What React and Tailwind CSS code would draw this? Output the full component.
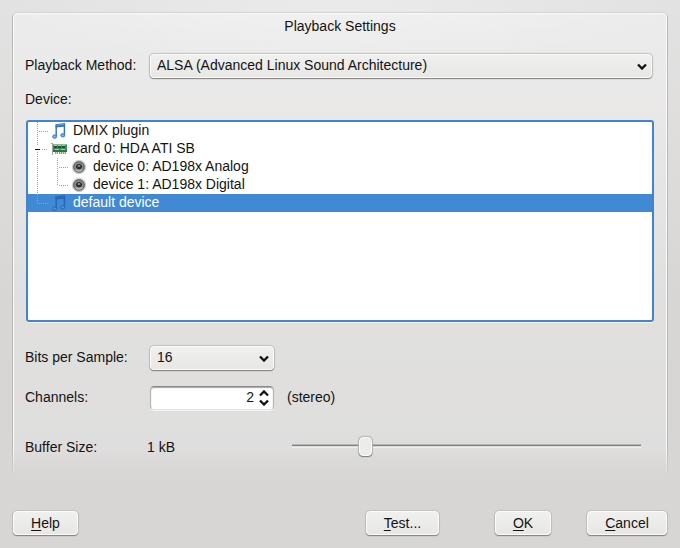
import React, { useState } from "react";

const raised =
  "rounded-[4px] border border-[#fbfbfb] bg-linear-to-b from-[#f0f0ef] to-[#e7e7e6] shadow-[0_1px_1px_0_#828180,0_0_1px_1px_#c2c1c0]";

function NoteIcon({ dim = false }) {
  const stem = dim ? "#2663b4" : "#2f6fc4";
  const light = dim ? "#3675c4" : "#7fb4ee";
  const head = dim ? "#4a90dd" : "#6cb0f2";
  return (
    <svg className="size-4 shrink-0" viewBox="0 0 16 16" aria-hidden="true">
      <path d="M5.2 2.5 V13 M13.4 1.5 V12" fill="none" stroke={stem} strokeWidth="1.4" />
      <path d="M4.5 1.2 L14.1 0 V3.4 L4.5 4.4 Z" fill={stem} />
      <path d="M5.6 2.3 L13.4 1.3" stroke={light} strokeWidth=".8" />
      <ellipse cx="3.6" cy="13.6" rx="2" ry="1.7" fill={head} stroke={stem} strokeWidth=".9" />
      <ellipse cx="11.8" cy="12.3" rx="2" ry="1.7" fill={head} stroke={stem} strokeWidth=".9" />
    </svg>
  );
}

function CardIcon() {
  return (
    <svg className="size-4 shrink-0" viewBox="0 0 16 16" aria-hidden="true">
      <path d="M0 2 H2 V14 H1 V3 H0 Z" fill="#a3a5a1" />
      <path d="M2 3 H16 V11 H2 Z" fill="#3c8d5f" />
      <path d="M2 3 H16 V4 H2 Z" fill="#8cba8c" />
      <path d="M2 9 H16 V11 H2 Z" fill="#2b7350" />
      <path d="M3 5 H6 V7 H3 Z M7 5 H10 V7 H7 Z M11 5 H14 V7 H11 Z" fill="#1d4f3c" />
      <path d="M3 4.5 H6 M7 4.5 H10 M11 4.5 H14 M4 8.5 H8 M10 8.5 H14" stroke="#b6cf9a" />
      <path d="M4 11 H7 V13 H4 Z M8 11 H15 V13 H8 Z" fill="#b39a3c" />
      <path d="M5.5 11 V13 M9.5 11 V13 M11.5 11 V13 M13.5 11 V13" stroke="#e3d99a" />
    </svg>
  );
}

function SpeakerIcon() {
  return (
    <svg className="size-4 shrink-0" viewBox="0 0 16 16" aria-hidden="true">
      <circle cx="8" cy="8" r="6.6" fill="#9c9c9c" stroke="#cfcfcf" strokeWidth="1.2" />
      <circle cx="8" cy="8" r="5.2" fill="#8a8a8a" stroke="#5b5b5b" strokeWidth=".9" />
      <ellipse cx="8" cy="7.6" rx="3" ry="2.6" fill="#2c2c2c" />
      <ellipse cx="8" cy="7" rx="1.5" ry="1.1" fill="#8f8f8f" />
      <path d="M4.6 10.6 Q8 13.6 11.4 10.6" fill="none" stroke="#c9c9c9" strokeWidth="1.2" />
    </svg>
  );
}

const guides = {
  first: { w: 23, dots: "M9.5 0 V18 M11 9.5 H20" },
  branch: { w: 23, dots: "M9.5 0 V6 M9.5 12 V18 M14 9.5 H20", minus: true },
  child: { w: 43, dots: "M9.5 0 V18 M29.5 0 V18 M31 9.5 H40" },
  lastChild: { w: 43, dots: "M9.5 0 V18 M29.5 0 V10 M31 9.5 H40" },
  last: { w: 23, dots: "M9.5 0 V10 M11 9.5 H20" },
};

function Guide({ kind }) {
  const g = guides[kind];
  return (
    <svg width={g.w} height="18" className="shrink-0" aria-hidden="true">
      <path d={g.dots} fill="none" stroke="#a0a0a0" strokeDasharray="1 1" />
      {g.minus && <path d="M7 9.5 H12" stroke="#111" />}
    </svg>
  );
}

const devices = [
  { name: "DMIX plugin", kind: "first", level: 1, icon: NoteIcon },
  { name: "card 0: HDA ATI SB", kind: "branch", level: 1, icon: CardIcon },
  { name: "device 0: AD198x Analog", kind: "child", level: 2, icon: SpeakerIcon },
  { name: "device 1: AD198x Digital", kind: "lastChild", level: 2, icon: SpeakerIcon },
  { name: "default device", kind: "last", level: 1, icon: NoteIcon },
];

function Chevron({ up = false }) {
  return (
    <svg width="10" height="7" viewBox="0 0 10 7" aria-hidden="true">
      <path d={up ? "M1 5.5 L5 1.5 L9 5.5" : "M1 1.5 L5 5.5 L9 1.5"} fill="none" stroke="#151515" strokeWidth="2.4" />
    </svg>
  );
}

function Dropdown({ id, options, className }) {
  return (
    <div className={`relative ${className}`}>
      <select id={id} className={`block h-6 w-full appearance-none pr-6 pb-[2px] pl-[6px] leading-5 outline-none ${raised}`}>
        {options.map((o) => (
          <option key={o}>{o}</option>
        ))}
      </select>
      <span className="pointer-events-none absolute inset-y-0 right-[5px] flex items-center">
        <Chevron />
      </span>
    </div>
  );
}

function PushButton({ hot, rest, className }) {
  return (
    <button type="button" className={`h-6 leading-5 ${raised} ${className}`}>
      <span className="underline underline-offset-2">{hot}</span>
      {rest}
    </button>
  );
}

export default function App() {
  const [selected, setSelected] = useState("default device");
  const [channels, setChannels] = useState(2);
  const [buffer, setBuffer] = useState(20);

  return (
    <main className="min-h-screen bg-[#d7d6d5] bg-[radial-gradient(ellipse_340px_64px_at_50%_0,#ebebeb,transparent),linear-gradient(to_bottom,#e2e2e2,#e0dfde_100px,#d7d6d5_300px)] bg-no-repeat px-[13px] pt-[13px] pb-3 font-['Liberation_Sans',Arial,sans-serif] text-sm leading-5 text-[#141312]">
      <section aria-labelledby="title" className="relative px-3 pt-[3px] pb-5">
        <div className="pointer-events-none absolute -inset-px rounded-[5px] border border-x-[#b9b8b7] border-t-[#d3d2d1] border-b-transparent bg-linear-to-b from-white/35 to-white/20 shadow-[inset_0_0_0_1px_#fafafa] mask-[linear-gradient(to_bottom,black_calc(100%-30px),transparent)]" />
        <div className="relative">
          <h1 id="title" className="text-center">Playback Settings</h1>

          <div className="mt-[18px] flex">
            <label htmlFor="method" className="w-[125px] shrink-0 pt-px">Playback Method:</label>
            <Dropdown id="method" options={["ALSA (Advanced Linux Sound Architecture)"]} className="mr-[3px] flex-1" />
          </div>

          <div id="device-label" className="mt-[11px]">Device:</div>
          <ul
            role="tree"
            aria-labelledby="device-label"
            className="mt-[11px] mr-px ml-px h-[202px] overflow-auto rounded-[3px] border-2 border-[#4584cb] bg-white shadow-[0_1px_0_#f4f4f4]"
          >
            {devices.map(({ name, kind, level, icon: Icon }) => {
              const on = selected === name;
              return (
                <li
                  key={name}
                  role="treeitem"
                  aria-level={level}
                  aria-selected={on}
                  onClick={() => setSelected(name)}
                  className={`flex h-[18px] items-center leading-4 ${on ? "bg-[#4189d4] text-white" : ""}`}
                >
                  <Guide kind={kind} />
                  <Icon dim={on} />
                  <span className="pb-[2px] pl-[6px]">{name}</span>
                </li>
              );
            })}
          </ul>

          <div className="mt-6 flex">
            <label htmlFor="bits" className="w-[125px] shrink-0 pt-px">Bits per Sample:</label>
            <Dropdown id="bits" options={["16", "24", "32"]} className="w-[124px]" />
          </div>

          <div className="mt-4 flex">
            <label htmlFor="channels" className="w-[125px] shrink-0 pt-px">Channels:</label>
            <div className="flex h-6 w-[124px] items-center rounded-[4px] border border-x-[#b3b2b1] border-t-[#8b8a89] border-b-[#e4e3e2] bg-white shadow-[inset_0_1px_1px_#a8a7a6,0_1px_0_#f4f4f4]">
              <input
                id="channels"
                inputMode="numeric"
                value={channels}
                onChange={(e) => setChannels(Number(e.target.value) || 0)}
                className="min-w-0 flex-1 bg-transparent pr-[5px] pb-[2px] text-right leading-5 outline-none"
              />
              <span className="mr-1 flex flex-col gap-[2px]">
                <button type="button" aria-label="More channels" onClick={() => setChannels(channels + 1)}>
                  <Chevron up />
                </button>
                <button type="button" aria-label="Fewer channels" onClick={() => setChannels(Math.max(1, channels - 1))}>
                  <Chevron />
                </button>
              </span>
            </div>
            <span className="ml-[13px] pt-px">(stereo)</span>
          </div>

          <div className="mt-[26px] flex">
            <label htmlFor="buffer" className="w-[122px] shrink-0 pt-px">Buffer Size:</label>
            <output htmlFor="buffer" className="w-[145px] shrink-0 pt-px">1 kB</output>
            <input
              id="buffer"
              type="range"
              min="0"
              max="100"
              step="any"
              value={buffer}
              onChange={(e) => setBuffer(Number(e.target.value))}
              className="mr-[14px] h-5 min-w-0 flex-1 appearance-none bg-[linear-gradient(#b5b4b3,#b5b4b3_1px,#848382_1px,#848382_2px,#dddcdb_2px,#dddcdb_3px,#efefee_3px)] bg-[length:100%_4px] bg-center bg-no-repeat outline-none [&::-webkit-slider-thumb]:h-[19px] [&::-webkit-slider-thumb]:w-[13px] [&::-webkit-slider-thumb]:appearance-none [&::-webkit-slider-thumb]:rounded-[4px] [&::-webkit-slider-thumb]:border [&::-webkit-slider-thumb]:border-[#fbfbfb] [&::-webkit-slider-thumb]:bg-[#ececeb] [&::-webkit-slider-thumb]:shadow-[0_1px_1px_0_#828180,0_0_1px_1px_#b5b4b3]"
            />
          </div>
        </div>
      </section>

      <footer className="mt-[34px] flex">
        <PushButton hot="H" rest="elp" className="w-[65px]" />
        <PushButton hot="T" rest="est..." className="ml-auto w-[73px]" />
        <PushButton hot="O" rest="K" className="ml-14 w-14" />
        <PushButton hot="C" rest="ancel" className="ml-9 w-20" />
      </footer>
    </main>
  );
}
